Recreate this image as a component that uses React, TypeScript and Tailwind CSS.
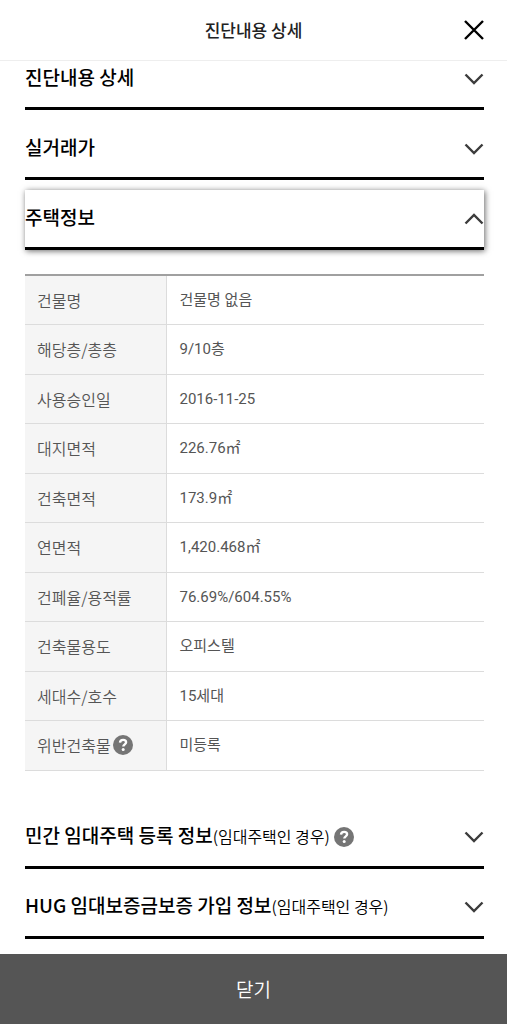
import { useState } from 'react';

const houseInfo = [
  { label: '건물명', value: '건물명 없음' },
  { label: '해당층/총층', value: '9/10층' },
  { label: '사용승인일', value: '2016-11-25' },
  { label: '대지면적', value: '226.76㎡' },
  { label: '건축면적', value: '173.9㎡' },
  { label: '연면적', value: '1,420.468㎡' },
  { label: '건폐율/용적률', value: '76.69%/604.55%' },
  { label: '건축물용도', value: '오피스텔' },
  { label: '세대수/호수', value: '15세대' },
  { label: '위반건축물', value: '미등록', help: true },
];

function HelpButton({ label }: { label: string }) {
  return (
    <button type="button" aria-label={`${label} 도움말`} className="shrink-0">
      <svg viewBox="0 0 20 20" className="block h-5 w-5">
        <circle cx="10" cy="10" r="10" fill="#757575" />
        <path
          d="M7 7.6C7.1 5.8 8.3 4.9 10.1 4.9c1.8 0 3 .9 3 2.4 0 2.1-2.8 2-2.8 4.3"
          fill="none"
          stroke="#fff"
          strokeWidth="2.4"
        />
        <circle cx="10.2" cy="14.4" r="1.5" fill="#fff" />
      </svg>
    </button>
  );
}

function Chevron({ open }: { open?: boolean }) {
  return (
    <svg viewBox="0 0 20 12" className="block h-3 w-5" fill="none" stroke="#3c3c3c" strokeWidth="2.4">
      <path d={open ? 'M1.5 10.5L10 2l8.5 8.5' : 'M1.5 1.5L10 10l8.5-8.5'} />
    </svg>
  );
}

type SectionHeaderProps = {
  title: string;
  note?: string;
  help?: boolean;
  open?: boolean;
  onToggle?: () => void;
};

function SectionHeader({ title, note, help, open = false, onToggle }: SectionHeaderProps) {
  return (
    <div
      className={`flex h-[60px] items-center border-b-[3px] border-black bg-white ${
        open ? 'shadow-[1px_1px_6px_0px_rgba(0,0,0,0.6)]' : ''
      }`}
    >
      <h2 className="pb-1 text-[19px] leading-7 font-medium text-black">
        {title}
        {note && <span className="text-[16px] font-[350]">{note}</span>}
      </h2>
      {help && (
        <div className="ml-1 flex">
          <HelpButton label={title} />
        </div>
      )}
      <button
        type="button"
        aria-label={title}
        aria-expanded={open}
        onClick={onToggle}
        className="flex h-full flex-1 items-center justify-end"
      >
        <Chevron open={open} />
      </button>
    </div>
  );
}

export default function App() {
  const [open, setOpen] = useState(true);

  return (
    <div className="flex min-h-screen flex-col bg-white font-['Noto_Sans_CJK_KR',sans-serif]">
      <header className="sticky top-0 z-10 flex h-[61px] items-center justify-center border-b border-[#eeeeee] bg-white">
        <h1 className="text-[17px] leading-6 font-medium text-[#222222]">진단내용 상세</h1>
        <button type="button" aria-label="닫기" className="absolute right-[23px]">
          <svg viewBox="0 0 20 20" className="block h-5 w-5" fill="none" stroke="#000" strokeWidth="2.4">
            <path d="M1 1l18 18M19 1L1 19" />
          </svg>
        </button>
      </header>

      <main className="-mt-[11px] flex flex-col gap-[10px] pr-[23px] pl-[25px]">
        <SectionHeader title="진단내용 상세" />
        <SectionHeader title="실거래가" />
        <section>
          <SectionHeader title="주택정보" open={open} onToggle={() => setOpen(!open)} />
          {open && (
            <table className="mt-6 mb-7 w-full table-fixed border-collapse border-t-2 border-[#a0a0a0] text-[#555555]">
              <tbody>
                {houseInfo.map((row) => (
                  <tr key={row.label} className="h-[49px] border-b border-[#dcdcdc] even:h-[50px]">
                    <th
                      scope="row"
                      className="w-[141px] border-r border-[#dcdcdc] bg-[#f5f5f5] pl-3 text-left text-[16px] leading-6 font-[350]"
                    >
                      <div className="flex items-center gap-0.5">
                        {row.label}
                        {row.help && <HelpButton label={row.label} />}
                      </div>
                    </th>
                    <td className="pl-[13px] font-[Roboto,'Noto_Sans_CJK_KR',sans-serif] text-[15px] leading-6">
                      {row.value}
                    </td>
                  </tr>
                ))}
              </tbody>
            </table>
          )}
        </section>
        <SectionHeader title="민간 임대주택 등록 정보" note="(임대주택인 경우)" help />
        <SectionHeader title="HUG 임대보증금보증 가입 정보" note="(임대주택인 경우)" />
      </main>

      <footer className="sticky bottom-0 mt-auto">
        <button type="button" className="block h-[70px] w-full bg-[#555555] text-[19px] leading-7 font-[350] text-white">
          닫기
        </button>
      </footer>
    </div>
  );
}
